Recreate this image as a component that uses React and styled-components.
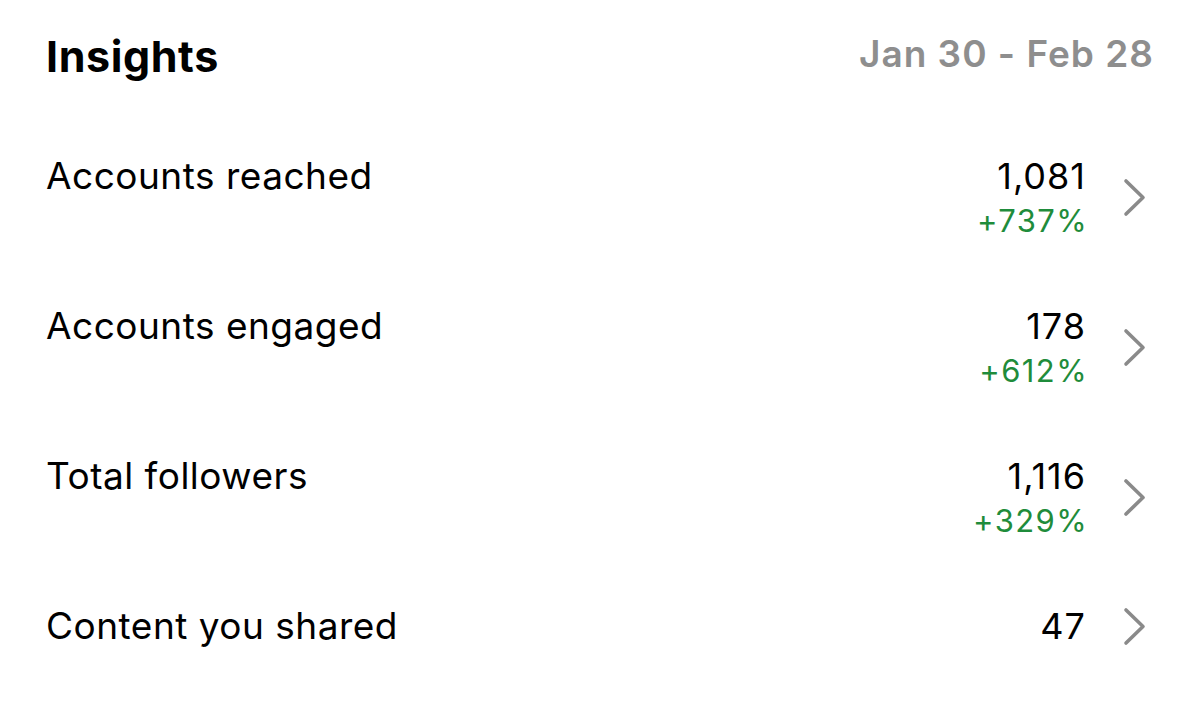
import React from "react";
import styled, { createGlobalStyle } from "styled-components";

const Global = createGlobalStyle`
  html, body { margin: 0; padding: 0; background: #ffffff; }
  body { font-family: Inter, "Noto Sans", "Liberation Sans", sans-serif; color: #000; }
`;

const Page = styled.div`
  width: 1200px;
  height: 707px;
  box-sizing: border-box;
  padding: 30px 47px 0 46px;
  background: #fff;
`;

const Header = styled.header`
  display: flex;
  justify-content: space-between;
  align-items: flex-start;
  height: 108px;
`;

const Title = styled.h1`
  margin: 0;
  font-size: 43px;
  line-height: 52px;
  font-weight: 700;
  letter-spacing: 0.6px;
`;

const DateRange = styled.div`
  padding-top: 1.5px;
  margin-right: -1px;
  font-size: 37px;
  line-height: 44px;
  font-weight: 600;
  letter-spacing: 1px;
  color: #8e8e8e;
`;

const List = styled.div`
  display: flex;
  flex-direction: column;
`;

const Row = styled.div`
  display: flex;
  align-items: flex-start;
  height: 150px;
  box-sizing: border-box;
  padding-top: 15.5px;
  padding-right: 6px;
`;

const Label = styled.div`
  flex: 1;
  font-size: 37px;
  line-height: 44px;
  font-weight: 400;
  letter-spacing: 0.5px;
`;

const Right = styled.div`
  display: flex;
  align-items: center;
  gap: 38px;
  padding-top: 1px;
`;

const Numbers = styled.div`
  display: flex;
  flex-direction: column;
  align-items: flex-end;
  margin-right: -1px;
`;

const Value = styled.div`
  font-size: 36px;
  line-height: 43px;
  font-weight: 400;
  letter-spacing: 1px;
`;

const Delta = styled.div`
  margin-top: 4px;
  margin-right: -2px;
  font-size: 31px;
  line-height: 38px;
  letter-spacing: 1.4px;
  color: #1f8c3b;
`;

const Chevron = () => (
  <svg width="24" height="40" viewBox="0 0 24 40" aria-hidden="true">
    <polyline
      points="3,4 20,20.5 3,37"
      fill="none"
      stroke="#8a8a8a"
      strokeWidth="3.6"
      strokeLinecap="round"
      strokeLinejoin="round"
    />
  </svg>
);

const rows = [
  { label: "Accounts reached", value: "1,081", delta: "+737%" },
  { label: "Accounts engaged", value: "178", delta: "+612%" },
  { label: "Total followers", value: "1,116", delta: "+329%" },
  { label: "Content you shared", value: "47" },
];

export default function App() {
  return (
    <>
      <Global />
      <Page>
        <Header>
          <Title>Insights</Title>
          <DateRange>Jan 30 - Feb 28</DateRange>
        </Header>
        <List>
          {rows.map((r) => (
            <Row key={r.label}>
              <Label>{r.label}</Label>
              <Right>
                <Numbers>
                  <Value>{r.value}</Value>
                  {r.delta && <Delta>{r.delta}</Delta>}
                </Numbers>
                <Chevron />
              </Right>
            </Row>
          ))}
        </List>
      </Page>
    </>
  );
}
